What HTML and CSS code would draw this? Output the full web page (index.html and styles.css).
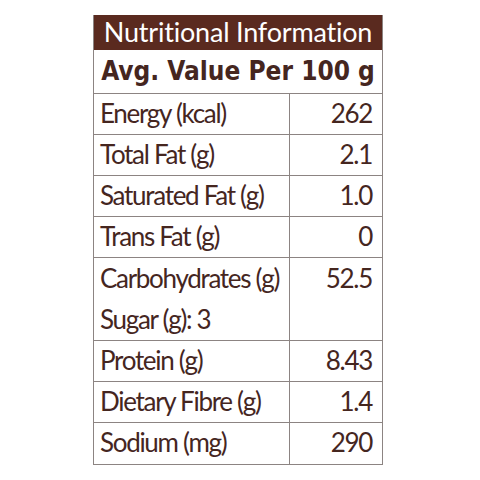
FILE: index.html
```html
<!DOCTYPE html>
<html lang="en">
<head>
  <meta charset="UTF-8">
  <title>Nutritional Information</title>
  <link rel="stylesheet" href="styles.css">
</head>
<body>

  <div class="panel">
    <div class="title">Nutritional Information</div>
    <div class="subtitle">Avg. Value Per 100 g</div>
    <table class="facts">
      <tr><td>Energy (kcal)</td><td class="num">262</td></tr>
      <tr><td>Total Fat (g)</td><td class="num">2.1</td></tr>
      <tr><td>Saturated Fat (g)</td><td class="num">1.0</td></tr>
      <tr><td>Trans Fat (g)</td><td class="num">0</td></tr>
      <tr class="tall"><td>Carbohydrates (g)<br>Sugar (g): 3</td><td class="num">52.5</td></tr>
      <tr><td>Protein (g)</td><td class="num">8.43</td></tr>
      <tr><td>Dietary Fibre (g)</td><td class="num">1.4</td></tr>
      <tr><td>Sodium (mg)</td><td class="num">290</td></tr>
    </table>
  </div>

</body>
</html>
```

FILE: styles.css
```css
* {
  box-sizing: border-box;
}

body {
  margin: 0;
  background: #ffffff;
  font-family: Lato, "Open Sans", sans-serif;
  color: #45261f;
}

.panel {
  width: 290px;
  margin: 15px 0 0 93px;
  border: 1px solid #8c8482;
  border-top: none;
}

.title {
  height: 35px;
  background: #5a2a1f;
  color: #ffffff;
  font-size: 27px;
  line-height: 34px;
  letter-spacing: -0.2px;
  text-align: center;
  white-space: nowrap;
}

.subtitle {
  height: 43px;
  font-family: "DejaVu Sans Condensed", "DejaVu Sans", sans-serif;
  font-size: 26px;
  font-weight: bold;
  line-height: 42px;
  text-align: center;
  white-space: nowrap;
}

.facts {
  width: 100%;
  border-collapse: collapse;
}

.facts td {
  height: 41px;
  padding: 0 10px 0 6px;
  font-size: 26px;
  line-height: 38px;
  letter-spacing: -1.3px;
  white-space: nowrap;
  border-top: 1px solid #8c8482;
  vertical-align: top;
}

.facts td:first-child {
  width: 194px;
  border-right: 1px solid #8c8482;
}

.facts tr.tall td {
  height: 82px;
  line-height: 41px;
}

.num {
  text-align: right;
}
```
